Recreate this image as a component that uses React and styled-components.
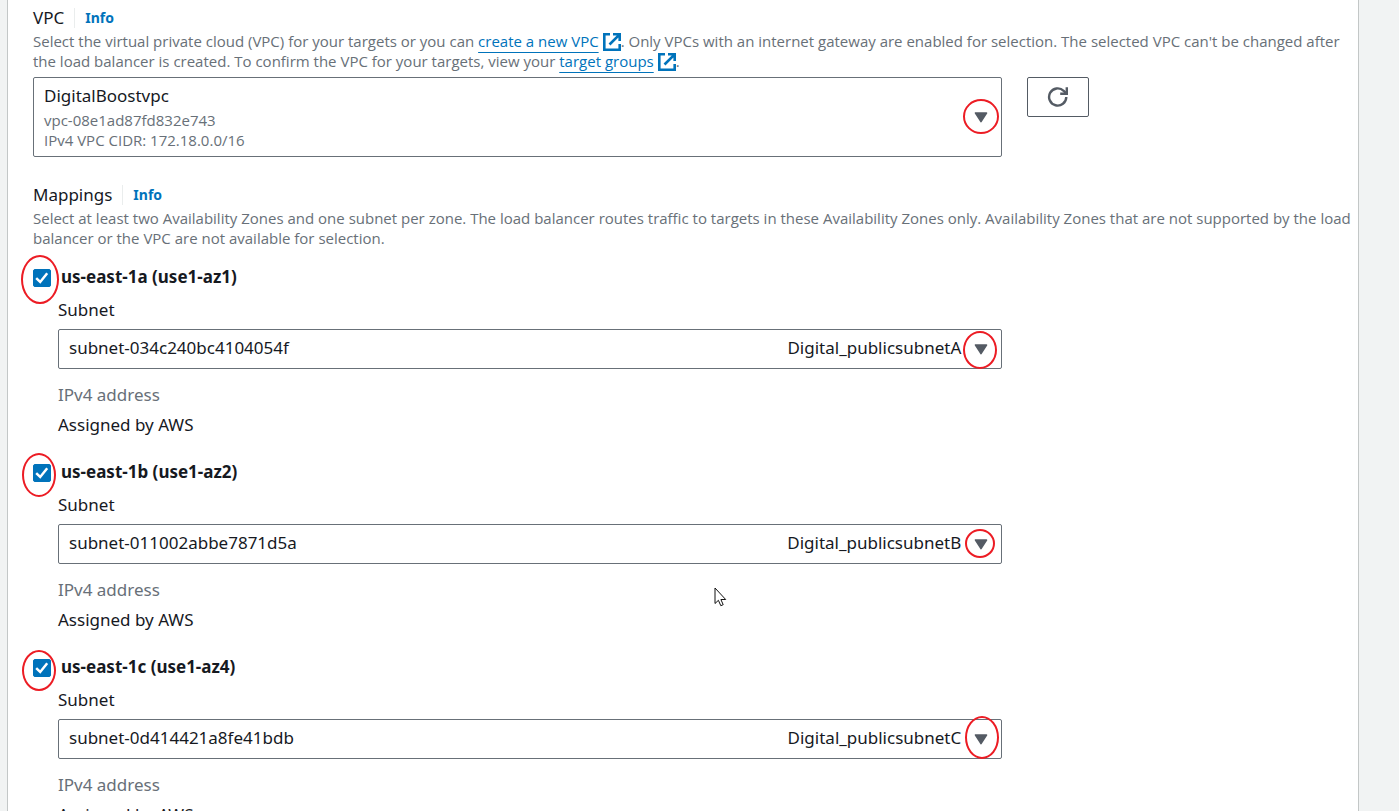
import React from "react";
import styled, { createGlobalStyle } from "styled-components";

const GlobalStyle = createGlobalStyle`
  *, *::before, *::after { box-sizing: border-box; }
  body {
    margin: 0;
    background: #f1f3f3;
    color: #16191f;
    font-family: "Noto Sans", "Open Sans", sans-serif;
    font-size: 17px;
    line-height: 20px;
  }
`;

const Page = styled.main`
  position: relative;
  height: 100vh;
  overflow: hidden auto;
  scrollbar-width: none;
  padding: 0 40px 0 7px;
`;

const Panel = styled.div`
  padding: 8px 2px 24px 25px;
  background: #fff;
  border: solid #c3c7c7;
  border-width: 0 1px;
`;

const Section = styled.section`
  margin-bottom: ${(p) => (p.$tight ? "19px" : "28px")};
`;

const HeadingRow = styled.div`
  display: flex;
  align-items: center;
  gap: 10px;
  height: 20px;
  margin-bottom: 3px;
`;

const Heading = styled.h2`
  margin: 0;
  font-size: 17px;
  font-weight: 400;
`;

const InfoLink = styled.a`
  padding-left: 10px;
  border-left: 1px solid #eaeded;
  color: #0073bb;
  font-size: 14px;
  font-weight: 700;
  text-decoration: none;
`;

const Description = styled.p`
  margin: 0;
  color: #687078;
  font-family: "Open Sans", "Noto Sans", sans-serif;
  font-size: 15px;
`;

const ExternalLink = styled.a`
  color: #0073bb;
  text-decoration: none;
`;

const LinkText = styled.span`
  padding-right: 4px;
  text-decoration: underline;
  text-decoration-thickness: 1px;
  text-underline-offset: 5px;
`;

const ExternalSvg = styled.svg`
  vertical-align: -4px;
`;

const PickerRow = styled.div`
  display: grid;
  grid-template-columns: calc(75% - 23px) 62px;
  gap: 25px;
  align-items: start;
  margin-top: 6px;
`;

const Picker = styled.div`
  position: relative;
  display: grid;
`;

const Select = styled.select`
  grid-area: 1 / 1;
  width: 100%;
  height: ${(p) => (p.$tall ? "80px" : "40px")};
  padding: ${(p) => (p.$tall ? "0 40px 42px 10px" : "0 40px 2px 10px")};
  appearance: none;
  background: #fff;
  border: 1px solid #687078;
  border-radius: 2px;
  color: #16191f;
  font: inherit;
`;

const PickerDetails = styled.div`
  grid-area: 1 / 1;
  align-self: end;
  z-index: 1;
  padding: 0 0 7px 11px;
  color: #687078;
  font-family: "Open Sans", "Noto Sans", sans-serif;
  font-size: 15px;
  pointer-events: none;
`;

const PickerTag = styled.span`
  grid-area: 1 / 1;
  justify-self: end;
  z-index: 1;
  padding: 9px 41px 0 0;
  pointer-events: none;
`;

const Caret = styled.svg`
  grid-area: 1 / 1;
  place-self: center end;
  z-index: 1;
  margin-right: 14px;
  pointer-events: none;
`;

const Mark = styled.span`
  position: absolute;
  z-index: 2;
  top: ${(p) => p.$y}px;
  ${(p) => (p.$left === undefined ? `right: ${p.$right}px` : `left: ${p.$left}px`)};
  width: ${(p) => p.$w}px;
  height: ${(p) => p.$h}px;
  border: 2px solid #ec1c24;
  border-radius: 50%;
  pointer-events: none;
`;

const RefreshButton = styled.button`
  display: flex;
  align-items: center;
  justify-content: center;
  height: 40px;
  padding: 0;
  background: #fff;
  border: 1px solid #545b64;
  border-radius: 2px;
`;

const Zone = styled.fieldset`
  min-width: 0;
  margin: 0 0 27px;
  padding: 0;
  border: 0;
`;

const ZoneHeader = styled.div`
  position: relative;
  display: flex;
  gap: 10px;
  height: 20px;
  margin-bottom: 13px;
`;

const ZoneLabel = styled.label`
  font-weight: 700;
`;

const CheckWrap = styled.span`
  display: grid;
  width: 18px;
  height: 18px;
  margin-top: 2px;
`;

const Checkbox = styled.input`
  grid-area: 1 / 1;
  width: 18px;
  height: 18px;
  margin: 0;
  appearance: none;
  background: #fff;
  border: 1px solid #687078;
  border-radius: 2px;
  &:checked {
    background: #0073bb;
    border-color: #0073bb;
  }
`;

const Tick = styled.svg`
  grid-area: 1 / 1;
  z-index: 1;
  pointer-events: none;
`;

const ZoneBody = styled.div`
  width: calc(75% - 23px);
  padding-left: 25px;
`;

const FieldLabel = styled.label`
  display: block;
  margin-bottom: 9px;
`;

const Facts = styled.dl`
  display: grid;
  gap: 10px;
  margin: 16px 0 0;
  dt { color: #687078; }
  dd { margin: 0; }
`;

const Pointer = styled.svg`
  position: absolute;
  z-index: 3;
  left: 714px;
  top: 587px;
  pointer-events: none;
`;

const ExternalIcon = () => (
  <ExternalSvg width="18" height="18" viewBox="0 0 18 18" fill="none" stroke="#0073bb" strokeWidth="2.6" aria-hidden="true">
    <path d="M7 1.3H1.3v15.4h15.4V11" />
    <path d="M10 1.3h6.7V8M16.2 1.8 6.5 11.5" />
  </ExternalSvg>
);

const CaretIcon = () => (
  <Caret width="14" height="12" viewBox="0 0 14 12" aria-hidden="true">
    <path d="M1.5 2h11L7 10.6z" fill="#545b64" stroke="#545b64" strokeWidth="1.6" strokeLinejoin="round" />
  </Caret>
);

const zones = [
  {
    id: "us-east-1a", az: "use1-az1", subnet: "subnet-034c240bc4104054f", tag: "Digital_publicsubnetA",
    check: { $left: -12, $y: -12, $w: 38, $h: 49 }, caret: { $right: 5, $y: 2, $w: 34, $h: 38 },
  },
  {
    id: "us-east-1b", az: "use1-az2", subnet: "subnet-011002abbe7871d5a", tag: "Digital_publicsubnetB",
    check: { $left: -11, $y: -9, $w: 34, $h: 44 }, caret: { $right: 7, $y: 5, $w: 30, $h: 29 },
  },
  {
    id: "us-east-1c", az: "use1-az4", subnet: "subnet-0d414421a8fe41bdb", tag: "Digital_publicsubnetC",
    check: { $left: -11, $y: -7, $w: 34, $h: 41 }, caret: { $right: 3, $y: -3, $w: 34, $h: 43 },
  },
];

function ZoneMapping({ zone }) {
  return (
    <Zone>
      <ZoneHeader>
        <CheckWrap>
          <Checkbox type="checkbox" id={zone.id} defaultChecked />
          <Tick width="18" height="18" viewBox="0 0 18 18" fill="none" stroke="#fff" strokeWidth="2.5" aria-hidden="true">
            <path d="M3.2 9.2 7.2 13 14.2 4.2" />
          </Tick>
        </CheckWrap>
        <ZoneLabel htmlFor={zone.id}>{zone.id} ({zone.az})</ZoneLabel>
        <Mark {...zone.check} />
      </ZoneHeader>
      <ZoneBody>
        <FieldLabel htmlFor={`${zone.id}-subnet`}>Subnet</FieldLabel>
        <Picker>
          <Select id={`${zone.id}-subnet`}>
            <option>{zone.subnet}</option>
          </Select>
          <PickerTag>{zone.tag}</PickerTag>
          <CaretIcon />
          <Mark {...zone.caret} />
        </Picker>
        <Facts>
          <dt>IPv4 address</dt>
          <dd>Assigned by AWS</dd>
        </Facts>
      </ZoneBody>
    </Zone>
  );
}

export default function App() {
  return (
    <>
      <GlobalStyle />
      <Page>
        <Panel>
          <Section>
            <HeadingRow>
              <Heading>VPC</Heading>
              <InfoLink href="#vpc-info">Info</InfoLink>
            </HeadingRow>
            <Description>
              Select the virtual private cloud (VPC) for your targets or you can{" "}
              <ExternalLink href="#create-vpc"><LinkText>create a new VPC</LinkText><ExternalIcon /></ExternalLink>
              . Only VPCs with an internet gateway are enabled for selection. The selected VPC can't be changed after
              the load balancer is created. To confirm the VPC for your targets, view your{" "}
              <ExternalLink href="#target-groups"><LinkText>target groups</LinkText><ExternalIcon /></ExternalLink>.
            </Description>
            <PickerRow>
              <Picker>
                <Select $tall aria-label="VPC">
                  <option>DigitalBoostvpc</option>
                </Select>
                <PickerDetails>
                  <div>vpc-08e1ad87fd832e743</div>
                  <div>IPv4 VPC CIDR: 172.18.0.0/16</div>
                </PickerDetails>
                <CaretIcon />
                <Mark $right={3} $y={22} $w={36} $h={35} />
              </Picker>
              <RefreshButton type="button" aria-label="Refresh">
                <svg width="22" height="22" viewBox="0 0 22 22" fill="none" stroke="#545b64" strokeWidth="2.4" aria-hidden="true">
                  <path d="M19.3 11a8.6 8.6 0 1 1-2.6-6.2L19 7.2" />
                  <path d="M19.8 1.2v6.6h-6.6" />
                </svg>
              </RefreshButton>
            </PickerRow>
          </Section>

          <Section $tight>
            <HeadingRow>
              <Heading>Mappings</Heading>
              <InfoLink href="#mappings-info">Info</InfoLink>
            </HeadingRow>
            <Description>
              Select at least two Availability Zones and one subnet per zone. The load balancer routes traffic to
              targets in these Availability Zones only. Availability Zones that are not supported by the load balancer
              or the VPC are not available for selection.
            </Description>
          </Section>

          {zones.map((zone) => <ZoneMapping key={zone.id} zone={zone} />)}
        </Panel>
        <Pointer width="13" height="20" viewBox="0 0 13 20" aria-hidden="true">
          <path d="M1 1v15.5l3.4-3.2 2.4 5.4 2.4-1-2.3-5.2h4.8z" fill="#fff" stroke="#111" />
        </Pointer>
      </Page>
    </>
  );
}
